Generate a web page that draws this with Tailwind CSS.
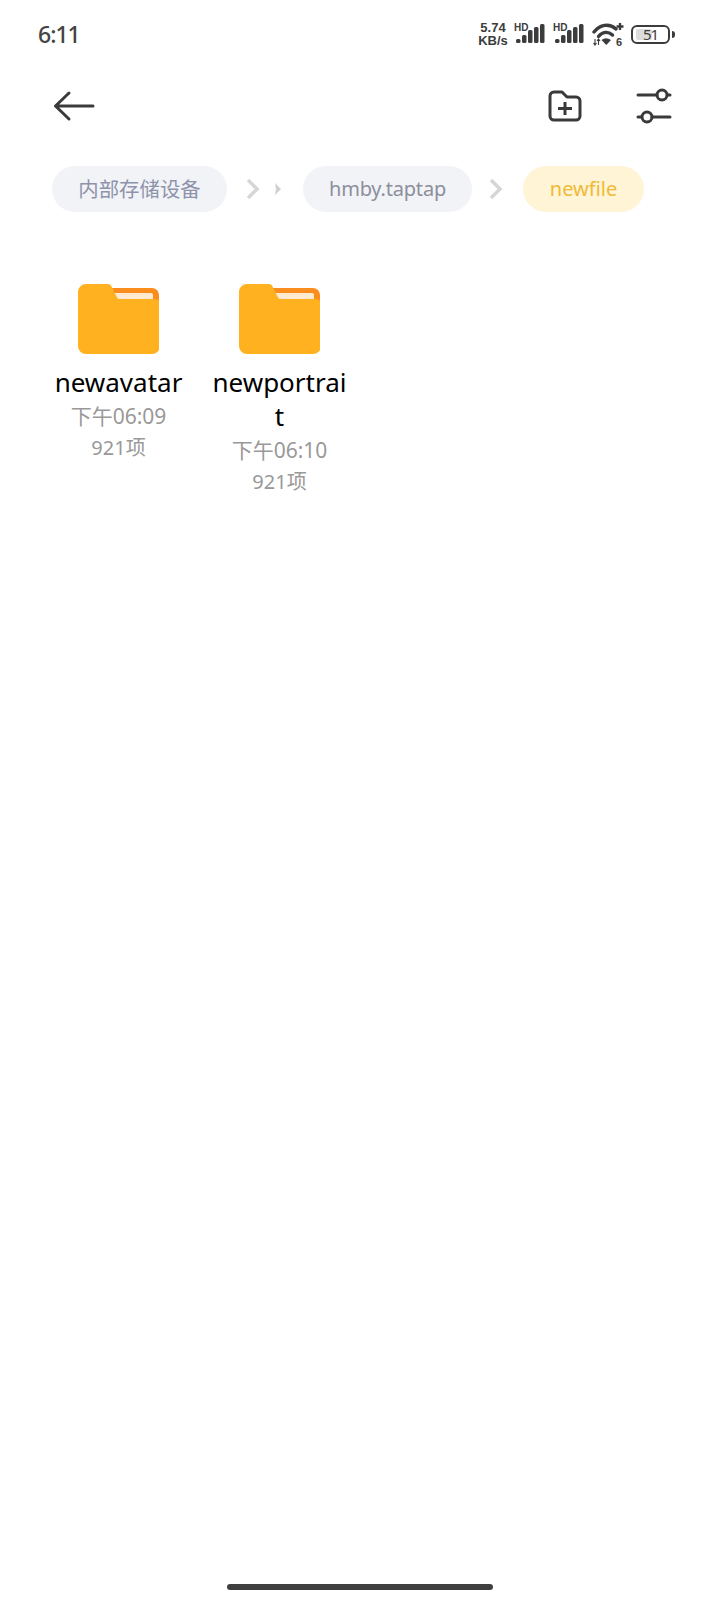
<!DOCTYPE html>
<html lang="en">
<head>
    <meta charset="UTF-8">
    <meta name="viewport" content="width=device-width, initial-scale=1.0">
    <title>newfile</title>
    <script src="https://cdn.jsdelivr.net/npm/@tailwindcss/browser@4"></script>
</head>
<body class="bg-white">
<div class="relative w-[720px] h-[1600px] bg-white overflow-hidden font-['Noto_Sans','Noto_Sans_CJK_SC',sans-serif]">

  <!-- status bar -->
  <div class="h-[68px] pl-[38px] pr-[45px] flex items-center justify-between text-[#3c3c3c]">
    <span class="text-[23px] font-medium leading-none tracking-[-1px] text-[#444444]">6:11</span>
    <div class="flex items-center">
      <div class="w-[32px] text-[13px] font-bold leading-[13px] text-center font-['Liberation_Sans',sans-serif]"><div>5.74</div><div>KB/s</div></div>
      <svg class="ml-[5px]" width="32" height="24" viewBox="0 0 32 24" fill="#3c3c3c">
        <text x="0" y="9" font-size="10" font-weight="700" font-family="Liberation Sans">HD</text>
        <rect x="2" y="17" width="4.500" height="4" rx="1.500"/><rect x="8" y="13" width="4.500" height="8" rx="1.500"/><rect x="14" y="8" width="4.500" height="13" rx="1.500"/><rect x="20" y="5" width="4.500" height="16" rx="1.500"/><rect x="26" y="2" width="4.500" height="19" rx="1.500"/>
      </svg>
      <svg class="ml-[7px]" width="32" height="24" viewBox="0 0 32 24" fill="#3c3c3c">
        <text x="0" y="9" font-size="10" font-weight="700" font-family="Liberation Sans">HD</text>
        <rect x="2" y="17" width="4.500" height="4" rx="1.500"/><rect x="8" y="13" width="4.500" height="8" rx="1.500"/><rect x="14" y="8" width="4.500" height="13" rx="1.500"/><rect x="20" y="5" width="4.500" height="16" rx="1.500"/><rect x="26" y="2" width="4.500" height="19" rx="1.500"/>
      </svg>
      <svg class="ml-[7px]" width="34" height="26" viewBox="0 0 34 26" fill="none" stroke="#3c3c3c" stroke-linecap="round">
        <path d="M2 11C8 3.500 17 2 24 8" stroke-width="3.400"/>
        <path d="M6.500 15.500C10.500 10.500 16 10 20.500 14" stroke-width="3.400"/>
        <path d="M9.500 19Q14 15.500 19 19L14.300 24Z" fill="#3c3c3c" stroke="none"/>
        <path d="M28 2V9M24.500 5.500H31.500" stroke-width="2.400" stroke-linecap="butt"/>
        <path d="M3 18V24M1.500 22L3 24L4.500 22M6.500 24V18M5 20L6.500 18L8 20" stroke-width="1.100" stroke-linecap="butt"/>
        <text x="24" y="25" font-size="11" font-weight="700" font-family="Liberation Sans" fill="#3c3c3c" stroke="none">6</text>
      </svg>
      <div class="ml-[5px] flex items-center">
        <div class="relative w-[39px] h-[19px] border-2 border-[#3c3c3c] rounded-[6px] overflow-hidden flex items-center justify-center">
          <div class="absolute left-[3px] top-[2px] bottom-[2px] w-[16px] bg-[#dcdcdc] rounded-[2px]"></div>
          <span class="relative text-[15px] leading-none tracking-[-1px] text-[#3c3c3c]">51</span>
        </div>
        <div class="ml-[2px] w-[3px] h-[7px] bg-[#3c3c3c] rounded-r-full"></div>
      </div>
    </div>
  </div>

  <!-- toolbar -->
  <div class="h-[76px] pl-[52px] pr-[48px] flex items-center justify-between">
    <svg width="44" height="34" viewBox="0 0 44 34" fill="none" stroke="#3a3a3a" stroke-width="3" stroke-linecap="round" stroke-linejoin="round">
      <path d="M41 17H3.500M17 4L3.500 17L17 30"/>
    </svg>
    <div class="flex items-center gap-[54px]">
      <svg width="34" height="32" viewBox="0 0 34 32" fill="none" stroke="#3a3a3a" stroke-width="3" stroke-linecap="round" stroke-linejoin="round">
        <path d="M2 6a4 4 0 0 1 4-4h8l5 5H28a4 4 0 0 1 4 4v15a4 4 0 0 1-4 4H6a4 4 0 0 1-4-4z"/>
        <path d="M17 12v13M10 18.500h14" stroke-linecap="butt"/>
      </svg>
      <svg width="36" height="36" viewBox="0 0 36 36" fill="none" stroke="#3a3a3a" stroke-width="3" stroke-linecap="round">
        <path d="M2 7h19M32 7h2M2 29h3M16 29h18"/>
        <circle cx="26" cy="7" r="5"/>
        <circle cx="11" cy="29" r="5"/>
      </svg>
    </div>
  </div>

  <!-- breadcrumb -->
  <div class="mt-[22px] pl-[52px] flex items-center h-[46px]">
    <div class="w-[175px] h-[46px] rounded-full bg-[#f2f3f7] flex items-center justify-center text-[20.400px] text-[#8e93ab]">内部存储设备</div>
    <svg class="ml-[19px]" width="14" height="22" viewBox="0 0 14 22" fill="none" stroke="#d6d6d6" stroke-width="3.500"><path d="M2 2l9 9-9 9"/></svg>
    <svg class="ml-[15px]" width="6" height="12" viewBox="0 0 6 12" fill="#d0d0d0"><path d="M0 0l6 6-6 6 1-6z"/></svg>
    <div class="ml-[22px] w-[169px] h-[46px] rounded-full bg-[#f2f3f7] flex items-center justify-center text-[20px] tracking-[-0.2px] text-[#8c8f9c]">hmby.taptap</div>
    <svg class="ml-[17px]" width="14" height="22" viewBox="0 0 14 22" fill="none" stroke="#d6d6d6" stroke-width="3.500"><path d="M2 2l9 9-9 9"/></svg>
    <div class="ml-[20px] w-[121px] h-[46px] rounded-full bg-[#fff4d6] flex items-center justify-center text-[20px] text-[#efba36]">newfile</div>
  </div>

  <!-- folders -->
  <div class="mt-[72px] pl-[50px] flex items-start gap-[24px]">
    <div class="w-[137px] flex flex-col items-center text-center">
      <svg width="81" height="70" viewBox="0 0 81 70">
        <path d="M24 4h50a7 7 0 0 1 7 7v20H24z" fill="#fb8c1e"/>
        <path d="M34 9h39a2 2 0 0 1 2 2v5H34z" fill="#ffe9cf"/>
        <path d="M0 8a8 8 0 0 1 8-8h22a4 4 0 0 1 3 1.500l6 12a3 3 0 0 0 3 1.500h33l4 .5v0a4 4 0 0 1 3 3.500v43a8 8 0 0 1-8 8H8a8 8 0 0 1-8-8z" fill="#ffb11f"/>
      </svg>
      <div class="mt-[11px] text-[26px] leading-[34px] text-black break-all">newavatar</div>
      <div class="mt-[2px] text-[21px] leading-[31px] text-[#999999]">下午06:09</div>
      <div class="text-[20px] leading-[31px] text-[#999999]">921项</div>
    </div>
    <div class="w-[137px] flex flex-col items-center text-center">
      <svg width="81" height="70" viewBox="0 0 81 70">
        <path d="M24 4h50a7 7 0 0 1 7 7v20H24z" fill="#fb8c1e"/>
        <path d="M34 9h39a2 2 0 0 1 2 2v5H34z" fill="#ffe9cf"/>
        <path d="M0 8a8 8 0 0 1 8-8h22a4 4 0 0 1 3 1.500l6 12a3 3 0 0 0 3 1.500h33l4 .5v0a4 4 0 0 1 3 3.500v43a8 8 0 0 1-8 8H8a8 8 0 0 1-8-8z" fill="#ffb11f"/>
      </svg>
      <div class="mt-[11px] text-[26px] leading-[34px] text-black break-all">newportrait</div>
      <div class="mt-[2px] text-[21px] leading-[31px] text-[#999999]">下午06:10</div>
      <div class="text-[20px] leading-[31px] text-[#999999]">921项</div>
    </div>
  </div>

  <!-- gesture bar -->
  <div class="absolute left-[227px] bottom-[10px] w-[266px] h-[6px] rounded-full bg-[#3f3f3f]"></div>
</div>
</body>
</html>
